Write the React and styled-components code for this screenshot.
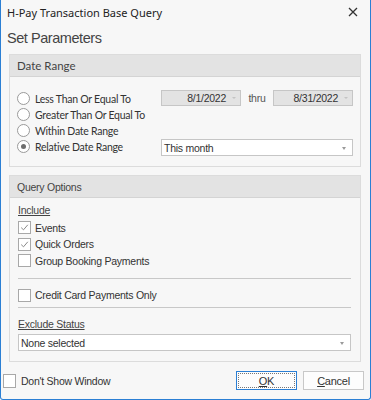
import React from "react";
import styled, { createGlobalStyle } from "styled-components";

const GlobalStyle = createGlobalStyle`
  html, body {
    margin: 0;
    padding: 0;
    background: #ffffff;
  }
`;

const Window = styled.div`
  box-sizing: border-box;
  width: 371px;
  height: 400px;
  background: #f7f7f7;
  border: 1px solid #2b7fd4;
  border-top: none;
  border-radius: 0 0 3px 3px;
  display: flex;
  flex-direction: column;
  font-family: "Liberation Sans", Arial, sans-serif;
  font-size: 10.5px;
  letter-spacing: -0.25px;
  color: #333;
`;

const TitleBar = styled.div`
  height: 24px;
  display: flex;
  align-items: center;
  justify-content: space-between;
  padding: 0 12px 0 6px;
  font-family: "Noto Sans", sans-serif;
  font-size: 11px;
  letter-spacing: 0;
  color: #222;
`;

const CloseX = styled.svg`
  width: 10px;
  height: 10px;
`;

const Heading = styled.div`
  font-size: 14.5px;
  letter-spacing: -0.45px;
  color: #444;
  padding: 6px 0 0 6px;
  height: 25px;
  box-sizing: border-box;
`;

const Group = styled.div`
  margin: ${(p) => p.$top}px 9px 0 8px;
  border: 1px solid #dcdcdc;
  background: #f7f7f7;
  height: ${(p) => p.$h}px;
  box-sizing: border-box;
  display: flex;
  flex-direction: column;
`;

const GroupHeader = styled.div`
  height: 21px;
  background: #e3e3e3;
  border-bottom: 1px solid #d4d4d4;
  display: flex;
  align-items: center;
  padding-left: 7px;
  font-family: ${(p) => (p.$segoe ? '"Lato", sans-serif' : '"Liberation Sans", Arial, sans-serif')};
  font-size: ${(p) => (p.$segoe ? "11.5px" : "10.5px")};
  letter-spacing: ${(p) => (p.$segoe ? "0" : "-0.25px")};
  color: #444;
`;

const DateBody = styled.div`
  display: grid;
  grid-template-columns: 144px 1fr;
  padding: 12px 8px 0 7px;
`;

const RadioList = styled.div`
  display: flex;
  flex-direction: column;
  gap: 3px;
  padding-top: 3px;
`;

const RadioRow = styled.div`
  display: flex;
  align-items: center;
  height: 13px;
  white-space: nowrap;
  font-family: "Lato", sans-serif;
  font-size: 10.5px;
  letter-spacing: -0.25px;
  color: #333;
`;

const RadioCircle = styled.span`
  width: 11px;
  height: 11px;
  border: 1px solid #9a9a9a;
  border-radius: 50%;
  background: #fff;
  margin-right: 5px;
  display: flex;
  align-items: center;
  justify-content: center;
  flex-shrink: 0;
  &::after {
    content: "";
    display: ${(p) => (p.$on ? "block" : "none")};
    width: 5px;
    height: 5px;
    border-radius: 50%;
    background: #6e6e6e;
  }
`;

const DateControls = styled.div`
  display: flex;
  flex-direction: column;
  justify-content: space-between;
  height: 66px;
  padding-top: 1px;
`;

const DateRow = styled.div`
  display: flex;
  align-items: center;
`;

const DateBox = styled.div`
  width: 80px;
  height: 16px;
  box-sizing: border-box;
  background: #e3e3e3;
  border: 1px solid #c6c6c6;
  display: flex;
  align-items: center;
  justify-content: flex-end;
  padding-right: 14px;
  color: #333;
  position: relative;
  &::after {
    content: "";
    position: absolute;
    right: 4px;
    top: 6px;
    border-left: 2px solid transparent;
    border-right: 2px solid transparent;
    border-top: 2px solid #c4c4c4;
  }
`;

const Thru = styled.span`
  width: 32px;
  text-align: center;
  color: #555;
`;

const Combo = styled.div`
  height: 17px;
  box-sizing: border-box;
  background: #fff;
  border: 1px solid #c6c6c6;
  display: flex;
  align-items: center;
  padding-left: 2px;
  color: #333;
  position: relative;
  &::after {
    content: "";
    position: absolute;
    right: 6px;
    top: 7px;
    border-left: 2.5px solid transparent;
    border-right: 2.5px solid transparent;
    border-top: 3px solid #9a9a9a;
  }
`;

const OptionsBody = styled.div`
  padding: 6px 9px 0 8px;
  display: flex;
  flex-direction: column;
`;

const SubLabel = styled.div`
  text-decoration: underline;
  color: #444;
  height: 14px;
  margin-bottom: ${(p) => p.$mb}px;
`;

const CheckRow = styled.div`
  display: flex;
  align-items: center;
  height: 13px;
  margin-bottom: 3.5px;
  color: #333;
`;

const CheckBox = styled.span`
  width: 11px;
  height: 11px;
  border: 1px solid #a8a8a8;
  background: #fff;
  margin-right: 4px;
  display: flex;
  align-items: center;
  justify-content: center;
  flex-shrink: 0;
`;

const Divider = styled.div`
  height: 1px;
  background: #c8c8c8;
  margin: ${(p) => p.$m};
`;

const Footer = styled.div`
  margin-top: 9px;
  display: flex;
  align-items: center;
  justify-content: space-between;
  padding: 0 6px 0 2px;
`;

const FooterCheck = styled.div`
  display: flex;
  align-items: center;
  color: #333;
`;

const BigCheck = styled.span`
  width: 11px;
  height: 12px;
  border: 1px solid #a8a8a8;
  background: #fff;
  margin-right: 5px;
`;

const Buttons = styled.div`
  display: flex;
  gap: 6px;
`;

const Button = styled.div`
  width: 61px;
  height: 19px;
  box-sizing: border-box;
  background: #fdfdfd;
  border: 1px solid ${(p) => (p.$primary ? "#2b7fd4" : "#c8c8c8")};
  display: flex;
  align-items: center;
  justify-content: center;
  font-size: 11px;
  color: #333;
  position: relative;
  &::before {
    content: "";
    display: ${(p) => (p.$primary ? "block" : "none")};
    position: absolute;
    inset: 1px;
    border: 1px dotted #777;
  }
`;

function Check({ on }) {
  return (
    <CheckBox>
      {on && (
        <svg width="9" height="9" viewBox="0 0 9 9">
          <path d="M1.2 4.6 L3.5 6.8 L7.8 1.8" fill="none" stroke="#8a8a8a" strokeWidth="1" />
        </svg>
      )}
    </CheckBox>
  );
}

export default function App() {
  const radios = [
    "Less Than Or Equal To",
    "Greater Than Or Equal To",
    "Within Date Range",
    "Relative Date Range",
  ];
  return (
    <>
      <GlobalStyle />
      <Window>
        <TitleBar>
          <span>H-Pay Transaction Base Query</span>
          <CloseX viewBox="0 0 10 10">
            <path d="M1 1 L9 9 M9 1 L1 9" stroke="#333" strokeWidth="1.3" />
          </CloseX>
        </TitleBar>
        <Heading>Set Parameters</Heading>

        <Group $top={5} $h={113}>
          <GroupHeader $segoe>Date Range</GroupHeader>
          <DateBody>
            <RadioList>
              {radios.map((r, i) => (
                <RadioRow key={r}>
                  <RadioCircle $on={i === 3} />
                  {r}
                </RadioRow>
              ))}
            </RadioList>
            <DateControls>
              <DateRow>
                <DateBox>8/1/2022</DateBox>
                <Thru>thru</Thru>
                <DateBox>8/31/2022</DateBox>
              </DateRow>
              <Combo>This month</Combo>
            </DateControls>
          </DateBody>
        </Group>

        <Group $top={8} $h={187}>
          <GroupHeader>Query Options</GroupHeader>
          <OptionsBody>
            <SubLabel $mb={3}>Include</SubLabel>
            <CheckRow>
              <Check on />
              Events
            </CheckRow>
            <CheckRow>
              <Check on />
              Quick Orders
            </CheckRow>
            <CheckRow>
              <Check />
              Group Booking Payments
            </CheckRow>
            <Divider $m="7px 0 10px" />
            <CheckRow>
              <Check />
              Credit Card Payments Only
            </CheckRow>
            <Divider $m="2px 0 10px" />
            <SubLabel $mb={2}>Exclude Status</SubLabel>
            <Combo>None selected</Combo>
          </OptionsBody>
        </Group>

        <Footer>
          <FooterCheck>
            <BigCheck />
            Don't Show Window
          </FooterCheck>
          <Buttons>
            <Button $primary>
              <span>
                <u>O</u>K
              </span>
            </Button>
            <Button>
              <span>
                <u>C</u>ancel
              </span>
            </Button>
          </Buttons>
        </Footer>
      </Window>
    </>
  );
}
